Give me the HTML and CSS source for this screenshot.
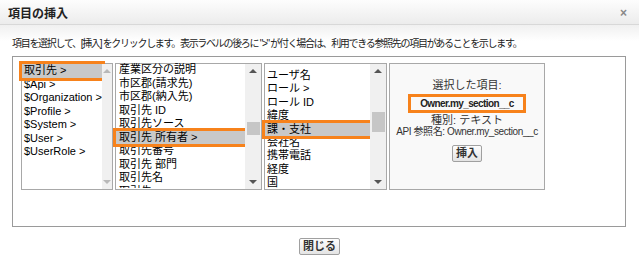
FILE: index.html
```html
<!DOCTYPE html>
<html lang="ja">
<head>
    <meta charset="UTF-8">
    <title>項目の挿入</title>
    <link rel="stylesheet" href="styles.css">
</head>
<body>
    <div class="dialog">
        <div class="titlebar">
            <h1>項目の挿入</h1>
            <span class="close">×</span>
        </div>

        <div class="content">
            <p class="hint">項目を選択して、[挿入] をクリックします。表示ラベルの後ろに "&gt;" が付く場合は、利用できる参照先の項目があることを示します。</p>

            <div class="picker">
                <div class="list list-root">
                    <ul class="items">
                        <li class="sel">取引先 &gt;</li>
                        <li>$Api &gt;</li>
                        <li>$Organization &gt;</li>
                        <li>$Profile &gt;</li>
                        <li>$System &gt;</li>
                        <li>$User &gt;</li>
                        <li>$UserRole &gt;</li>
                    </ul>
                    <div class="scroll off">
                        <span class="up"></span>
                        <span class="track"></span>
                        <span class="down"></span>
                    </div>
                </div>

                <div class="list list-account">
                    <ul class="items">
                        <li>産業区分の説明</li>
                        <li>市区郡(請求先)</li>
                        <li>市区郡(納入先)</li>
                        <li>取引先 ID</li>
                        <li>取引先ソース</li>
                        <li class="sel">取引先 所有者 &gt;</li>
                        <li>取引先番号</li>
                        <li>取引先 部門</li>
                        <li>取引先名</li>
                        <li class="peek">取引先</li>
                    </ul>
                    <div class="scroll">
                        <span class="up"></span>
                        <span class="track"><i class="thumb thumb-account"></i></span>
                        <span class="down"></span>
                    </div>
                </div>

                <div class="list list-owner">
                    <ul class="items">
                        <li>ユーザ名</li>
                        <li>ロール &gt;</li>
                        <li>ロール ID</li>
                        <li>緯度</li>
                        <li class="sel">課・支社</li>
                        <li>会社名</li>
                        <li>携帯電話</li>
                        <li>経度</li>
                        <li>国</li>
                    </ul>
                    <div class="scroll">
                        <span class="up"></span>
                        <span class="track"><i class="thumb thumb-owner"></i></span>
                        <span class="down"></span>
                    </div>
                </div>

                <div class="detail">
                    <div class="detail-label">選択した項目:</div>
                    <div class="detail-name">Owner.my_section__c</div>
                    <div>種別: テキスト</div>
                    <div class="detail-api">API 参照名: Owner.my_section__c</div>
                    <button class="btn btn-insert">挿入</button>
                </div>
            </div>

            <div class="actions">
                <button class="btn">閉じる</button>
            </div>
        </div>
    </div>
</body>
</html>
```

FILE: styles.css
```css
body {
    margin: 0;
    background: #fff;
    font-family: "Liberation Sans", "Noto Sans CJK JP", sans-serif;
    font-size: 11px;
    color: #000;
}

.dialog {
    width: 639px;
    height: 267px;
}

.titlebar {
    height: 24px;
    display: flex;
    align-items: center;
    justify-content: space-between;
    padding: 0 12px 0 8px;
    background: linear-gradient(#fdfdfd, #ececec);
    border-bottom: 1px solid #d8d8d8;
}

.titlebar h1 {
    margin: 0;
    font-size: 12px;
    font-weight: bold;
    color: #222;
}

.close {
    font-size: 12px;
    font-weight: bold;
    color: #888;
    margin-top: 2px;
}

.content {
    padding: 10px 12px 0 12px;
    background: linear-gradient(#f0f0f0, #fff 16px);
}

.hint {
    margin: 0 0 3px 0;
    line-height: 18px;
    font-size: 10px;
    letter-spacing: -1.3px;
    white-space: nowrap;
    color: #222;
}

.picker {
    display: flex;
    gap: 1px;
    height: 171px;
    width: 614px;
    padding: 6px 8px 0 8px;
    box-sizing: border-box;
    border: 1px solid #9a9a9a;
}

.list {
    display: flex;
    height: 127px;
    box-sizing: border-box;
    border: 1px solid #a8a8a8;
    background: #fff;
}

.list-root { width: 92px; }
.list-account { width: 147px; margin-left: 1px; }
.list-owner { width: 123px; margin-left: 1px; }

.items {
    flex: 1;
    list-style: none;
    margin: 0;
    padding: 0;
}

.items li {
    height: 13.5px;
    line-height: 13.5px;
    padding-left: 2px;
    white-space: nowrap;
}

.list-account .items li { padding-left: 3px; }
.list-account .items { margin-top: -1px; }
.list-owner .items { padding-top: 5px; }
.list-owner .items li { height: 13.4px; line-height: 13.4px; }

.items li.sel {
    background: #c8c8c8;
    outline: 3px solid #f7821b;
}

.items li.peek {
    height: 3px;
    overflow: hidden;
    line-height: 13px;
}

.scroll {
    width: 16px;
    display: flex;
    flex-direction: column;
    background: #f0f0f0;
}

.scroll .up,
.scroll .down {
    height: 14px;
    display: flex;
    align-items: center;
    justify-content: center;
}

.scroll .up::before,
.scroll .down::before {
    content: "";
    border-left: 4px solid transparent;
    border-right: 4px solid transparent;
}

.scroll .up::before { border-bottom: 4px solid #555; }
.scroll .down::before { border-top: 4px solid #555; }
.scroll.off .up::before { border-bottom-color: #b8b8b8; }
.scroll.off .down::before { border-top-color: #b8b8b8; }

.track {
    flex: 1;
    display: flex;
    flex-direction: column;
    align-items: center;
}

.thumb {
    width: 13px;
    background: #c6c6c6;
}

.thumb-account { height: 13px; margin-top: 44px; }
.thumb-owner { height: 20px; margin-top: 34px; }

.detail {
    width: 156px;
    height: 127px;
    margin-left: 1px;
    box-sizing: border-box;
    border: 1px solid #a8a8a8;
    background: #f9f9f9;
    display: flex;
    flex-direction: column;
    align-items: center;
    padding-top: 15px;
    line-height: 12px;
    color: #333;
}

.detail-label {
    margin-bottom: 3px;
}

.detail-name {
    width: 112px;
    height: 13px;
    line-height: 13px;
    text-align: center;
    font-weight: bold;
    font-size: 10px;
    letter-spacing: -0.6px;
    color: #222;
    border: 3px solid #f7821b;
    margin-bottom: 1px;
}

.detail-api {
    font-size: 10px;
    letter-spacing: -0.4px;
    white-space: nowrap;
}

.btn {
    font-family: "Liberation Sans", "Noto Sans CJK JP", sans-serif;
    font-size: 11px;
    font-weight: bold;
    color: #333;
    padding: 0 3px;
    height: 17px;
    line-height: 13px;
    border: 1px solid #a0a0a0;
    border-radius: 2px;
    background: linear-gradient(#fdfdfd, #e4e4e4);
    cursor: pointer;
}

.btn-insert {
    margin-top: 7px;
}

.actions {
    display: flex;
    justify-content: center;
    padding-top: 11px;
}
```
